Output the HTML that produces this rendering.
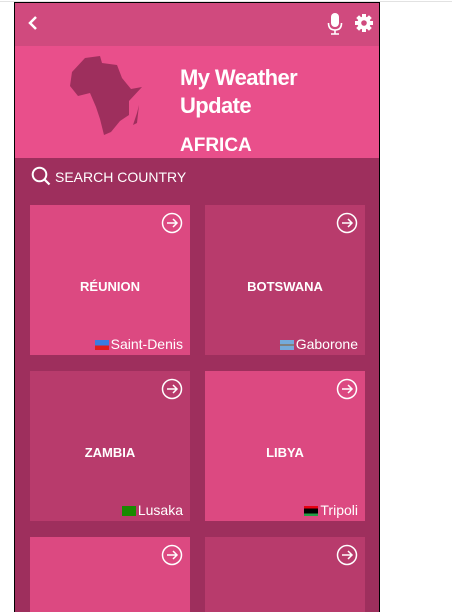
<!DOCTYPE html>
<html><head><style>
html,body{margin:0;width:452px;height:612px;overflow:hidden}
body{background:#fff;font-family:"Liberation Sans",sans-serif;position:relative}
.top{position:absolute;left:0;top:1px;width:452px;height:1px;background:#e2e2e2}
.frame{position:absolute;left:14px;top:2px;width:366px;height:610px;border-left:1px solid #000;border-right:1px solid #000;border-top:1px solid #000;background:#9e2f5d;overflow:hidden;box-sizing:border-box}
.hdr{position:absolute;left:0;top:0;width:366px;height:43px;background:#d04a7e}
.ban{position:absolute;left:0;top:43px;width:366px;height:112px;background:#e94f8b}
.t1{position:absolute;left:165px;top:18px;color:#fff;font-weight:bold;font-size:22px;line-height:28px;letter-spacing:-0.6px}
.t2{position:absolute;left:165px;top:89px;color:#fff;font-weight:bold;font-size:19px}
.search{position:absolute;left:40px;top:166px;color:#fff;font-size:14px}
.card{position:absolute;width:160px;height:150px;color:#fff}
.card .n{position:absolute;top:74px;width:100%;text-align:center;font-weight:bold;font-size:13px}
.card .c{position:absolute;right:7px;bottom:3px;font-size:14px}
.card svg.a{position:absolute;right:7px;top:7px}
.f{display:inline-block;width:14px;height:10px;vertical-align:-1px;margin-right:2px}
.l{background:#dc4981}.d{background:#b83b6c}
</style></head><body>
<div class="top"></div>
<div class="frame">
<div class="hdr">
<svg style="position:absolute;left:12px;top:12px" width="12" height="16" viewBox="0 0 12 16"><path d="M9 2 L3 8 L9 14" stroke="#fff" stroke-width="2.5" fill="none"/></svg>
<svg style="position:absolute;left:312px;top:9px" width="16" height="24" viewBox="0 0 16 24"><rect x="4" y="1" width="8" height="14" rx="4" fill="#fff"/><path d="M1.5 11 Q1.5 18 8 18 Q14.5 18 14.5 11" stroke="#fff" stroke-width="1.6" fill="none"/><path d="M8 18 V22 M4 22 H12" stroke="#fff" stroke-width="1.6"/></svg>
<svg style="position:absolute;left:339px;top:10px" width="20" height="20" viewBox="0 0 20 20"><g fill="#fff"><circle cx="10" cy="10" r="6.5"/><g><rect x="8" y="1" width="4" height="4"/><rect x="8" y="15" width="4" height="4"/><rect x="1" y="8" width="4" height="4"/><rect x="15" y="8" width="4" height="4"/></g><g transform="rotate(45 10 10)"><rect x="8" y="1" width="4" height="4"/><rect x="8" y="15" width="4" height="4"/><rect x="1" y="8" width="4" height="4"/><rect x="15" y="8" width="4" height="4"/></g></g><circle cx="10" cy="10" r="2.8" fill="#d04a7e"/></svg>
</div>
<div class="ban">
<svg style="position:absolute;left:54px;top:7px" width="76" height="82" viewBox="0 0 76 82"><path fill="#9e2f5d" d="M16 5 L31 3 L33 10 L48 12 L53 25 L62 36 L73 34 L60 48 L60 62 L51 68 L42 79 L35 82 L31 66 L27 54 L21 40 L9 43 L1 33 L3 19 Z M68 60 L70 52 L68 70 L64 72 Z"/></svg>
<div class="t1">My Weather<br>Update</div>
<div class="t2">AFRICA</div>
</div>
<svg style="position:absolute;left:16px;top:163px" width="20" height="20" viewBox="0 0 20 20"><circle cx="8.5" cy="8.5" r="6.8" stroke="#fff" stroke-width="2" fill="none"/><path d="M13.5 13.5 L18.5 18.5" stroke="#fff" stroke-width="2.2"/></svg>
<div class="search">SEARCH COUNTRY</div>

<div class="card l" style="left:15px;top:202px"><svg class="a" width="22" height="22" viewBox="0 0 22 22"><circle cx="11" cy="11" r="9.5" stroke="#fff" stroke-width="1.5" fill="none"/><path d="M6 11H16M12 7L16 11L12 15" stroke="#fff" stroke-width="1.5" fill="none"/></svg><div class="n">RÉUNION</div><div class="c"><span class="f" style="background:linear-gradient(#3a7ce0 55%,#e21c1c 55%)"></span>Saint-Denis</div></div>
<div class="card d" style="left:190px;top:202px"><svg class="a" width="22" height="22" viewBox="0 0 22 22"><circle cx="11" cy="11" r="9.5" stroke="#fff" stroke-width="1.5" fill="none"/><path d="M6 11H16M12 7L16 11L12 15" stroke="#fff" stroke-width="1.5" fill="none"/></svg><div class="n">BOTSWANA</div><div class="c"><span class="f" style="background:linear-gradient(#75aadb 38%,#fff 38%,#fff 44%,#000 44%,#000 56%,#fff 56%,#fff 62%,#75aadb 62%)"></span>Gaborone</div></div>
<div class="card d" style="left:15px;top:368px"><svg class="a" width="22" height="22" viewBox="0 0 22 22"><circle cx="11" cy="11" r="9.5" stroke="#fff" stroke-width="1.5" fill="none"/><path d="M6 11H16M12 7L16 11L12 15" stroke="#fff" stroke-width="1.5" fill="none"/></svg><div class="n">ZAMBIA</div><div class="c"><span class="f" style="background:#198a00"></span>Lusaka</div></div>
<div class="card l" style="left:190px;top:368px"><svg class="a" width="22" height="22" viewBox="0 0 22 22"><circle cx="11" cy="11" r="9.5" stroke="#fff" stroke-width="1.5" fill="none"/><path d="M6 11H16M12 7L16 11L12 15" stroke="#fff" stroke-width="1.5" fill="none"/></svg><div class="n">LIBYA</div><div class="c"><span class="f" style="background:linear-gradient(#e70013 25%,#000 25%,#000 75%,#239e46 75%)"></span>Tripoli</div></div>
<div class="card l" style="left:15px;top:534px"><svg class="a" width="22" height="22" viewBox="0 0 22 22"><circle cx="11" cy="11" r="9.5" stroke="#fff" stroke-width="1.5" fill="none"/><path d="M6 11H16M12 7L16 11L12 15" stroke="#fff" stroke-width="1.5" fill="none"/></svg></div>
<div class="card d" style="left:190px;top:534px"><svg class="a" width="22" height="22" viewBox="0 0 22 22"><circle cx="11" cy="11" r="9.5" stroke="#fff" stroke-width="1.5" fill="none"/><path d="M6 11H16M12 7L16 11L12 15" stroke="#fff" stroke-width="1.5" fill="none"/></svg></div>
</div>
</body></html>
